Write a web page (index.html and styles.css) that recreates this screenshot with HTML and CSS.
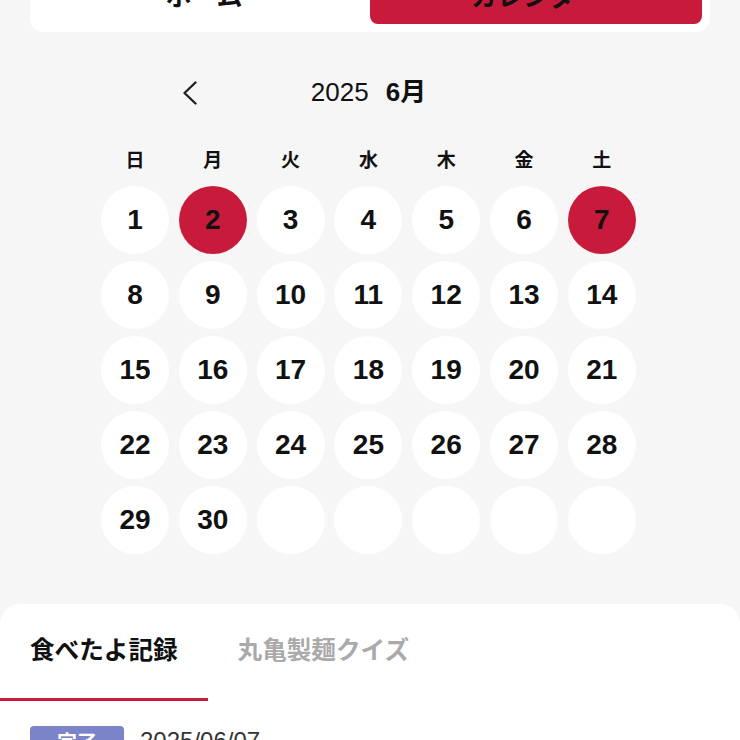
FILE: index.html
```html
<!DOCTYPE html>
<html lang="ja">
<head>
  <meta charset="UTF-8" />
  <meta name="viewport" content="width=device-width, initial-scale=1.0" />
  <title>カレンダー</title>
  <link rel="stylesheet" href="styles.css">
</head>
<body>

<div class="page">
  <div class="switch">
    <div class="switch-tab">ホーム</div>
    <div class="switch-tab active">カレンダー</div>
  </div>

  <div class="calendar">
    <div class="cal-head">
      <button class="arrow" aria-label="前の月">
        <svg width="16" height="24" viewBox="0 0 16 24"><path d="M13.5 1.5 L2.5 12 L13.5 22.5" fill="none" stroke="#222" stroke-width="2.4" stroke-linecap="round" stroke-linejoin="round"/></svg>
      </button>
      <div class="cal-title"><span class="year">2025</span><span class="month">6月</span></div>
      <div></div>
    </div>

    <div class="weekdays">
      <span>日</span><span>月</span><span>火</span><span>水</span><span>木</span><span>金</span><span>土</span>
    </div>

    <div class="days" id="days"></div>
  </div>
</div>

<div class="sheet">
  <div class="tabs">
    <div class="tab active">食べたよ記録</div>
    <div class="tab">丸亀製麺クイズ</div>
  </div>
  <div class="record">
    <span class="badge">完了</span>
    <span class="record-date">2025/06/07</span>
  </div>
</div>

<script>
  const eaten = [2, 7];
  const box = document.getElementById('days');
  for (let i = 1; i <= 35; i++) {
    const d = document.createElement('div');
    d.className = 'day' + (eaten.includes(i) ? ' eaten' : '');
    d.textContent = i <= 30 ? i : '';
    box.appendChild(d);
  }
</script>

</body>
</html>
```

FILE: styles.css
```css
:root {
  --bg: #f6f6f6;
  --red: #c81b3b;
  --text: #111;
}
body {
  font-family: "Liberation Sans", "Noto Sans CJK JP", sans-serif;
  background: var(--bg);
  color: var(--text);
  margin: 0;
  height: 740px;
  overflow: hidden;
}
.page {
  margin-top: -44px;
}

.switch {
  display: flex;
  margin: 0 30px;
  padding: 8px;
  background: #fff;
  border-radius: 14px;
}
.switch-tab {
  flex: 1;
  height: 60px;
  display: flex;
  align-items: center;
  justify-content: center;
  font-size: 26px;
  font-weight: bold;
  border-radius: 8px;
}
.switch-tab.active { background: var(--red); }

.calendar {
  width: 535px;
  margin-left: 101px;
}
.cal-head {
  height: 48px;
  margin-top: 37px;
  display: grid;
  grid-template-columns: 1fr auto 1fr;
  align-items: center;
}
.arrow {
  justify-self: start;
  margin-left: 65px;
  width: 48px;
  height: 48px;
  padding: 0;
  border: none;
  background: none;
  display: flex;
  align-items: center;
  justify-content: center;
}
.cal-title {
  display: flex;
  align-items: baseline;
  gap: 17px;
  font-size: 26px;
  margin-bottom: 8px;
  color: #111;
}
.month { font-weight: bold; }

.weekdays, .days {
  display: grid;
  grid-template-columns: repeat(7, 68px);
  column-gap: 9.8px;
}
.weekdays {
  margin-top: 32px;
  line-height: 24px;
  font-size: 19px;
  font-weight: bold;
  text-align: center;
}
.days {
  margin-top: 13px;
  row-gap: 7px;
}
.day {
  width: 68px;
  height: 68px;
  border-radius: 50%;
  background: #fff;
  display: flex;
  align-items: center;
  justify-content: center;
  font-size: 28px;
  font-weight: bold;
}
.day.eaten { background: var(--red); }

.sheet {
  margin-top: 50px;
  background: #fff;
  border-radius: 20px 20px 0 0;
  height: 200px;
}
.tabs {
  display: flex;
}
.tab {
  padding: 29px 30px 30px;
  font-size: 24.6px;
  line-height: 35px;
  font-weight: bold;
  color: #aaa;
  border-bottom: 3px solid transparent;
}
.tab.active {
  color: #111;
  border-bottom-color: var(--red);
}
.record {
  display: flex;
  align-items: center;
  gap: 16px;
  padding: 25px 30px 0;
}
.badge {
  width: 94px;
  height: 30px;
  border-radius: 4px;
  background: #7c84c9;
  color: #fff;
  font-size: 20px;
  font-weight: bold;
  display: flex;
  align-items: center;
  justify-content: center;
}
.record-date {
  font-size: 24px;
  color: #333;
}
```
